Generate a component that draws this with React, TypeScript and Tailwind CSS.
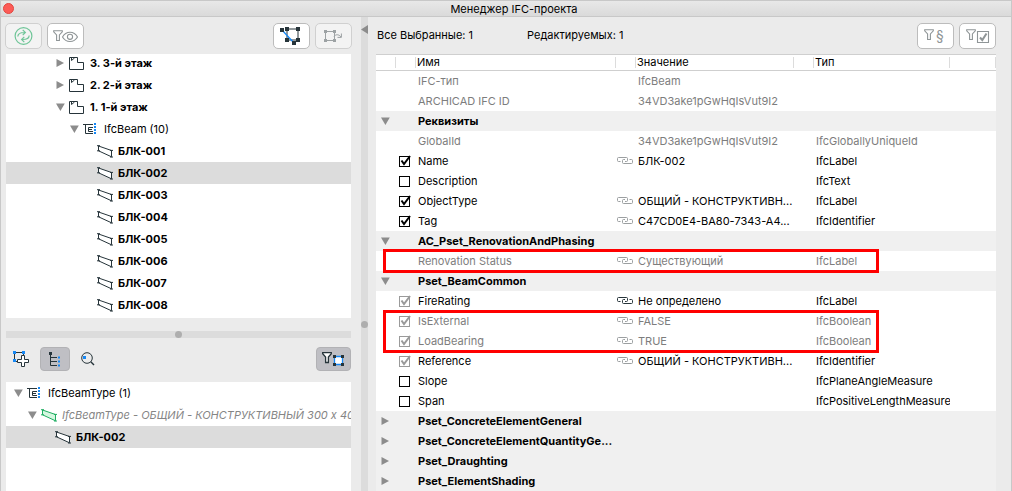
import React from 'react';
import clsx from 'clsx';

type IconProps = { className?: string };

const Funnel = ({ x = 0, y = 0 }: { x?: number; y?: number }) => (
    <path transform={`translate(${x} ${y})`} d="M.7 .7 H9.3 V1.8 L6.4 5 V10.5 H3.6 V5 L.7 1.8 Z" />
);

const RefreshIcon = () => (
    <svg width="19" height="18" viewBox="0 0 19 18" fill="none" stroke="#6fc598" strokeWidth="1.2">
        <circle cx="9.5" cy="9" r="8.4" />
        <path d="M3.8 9.5 C4 6.5 6 5.3 11 5.5 M8.7 2.8 L11.4 5.5 L8.7 8.2" />
        <path d="M15.2 8.5 C15 11.5 13 12.7 8 12.5 M10.3 9.8 L7.6 12.5 L10.3 15.2" />
    </svg>
);

const FilterEyeIcon = () => (
    <svg width="25" height="14" viewBox="0 0 25 14" fill="none" stroke="#8f9597" strokeWidth="1.1">
        <Funnel y={1} />
        <path d="M9.5 8 C13 1.6 21 1.6 24.5 8 C21 14 13 14 9.5 8 Z" />
        <circle cx="17" cy="7.8" r="2.6" />
    </svg>
);

const SelectionIcon = () => (
    <svg width="23" height="20" viewBox="0 0 23 20" fill="#26343a">
        <path d="M7 3 H18 V14 H7 Z" fill="none" stroke="#26343a" />
        <path d="M2 4 L14 17" stroke="#1688f5" strokeWidth="1.3" />
        <path d="M0 2h4v4h-4z M5 1h4v4h-4z M16 1h4v4h-4z M5 12h4v4h-4z M16 12h4v4h-4z M12 15h4v4h-4z" />
    </svg>
);

const SelectionNextIcon = () => (
    <svg width="19" height="14" viewBox="0 0 19 14" fill="#9da2a4">
        <path d="M1.5 2.5 H10.5 V11.5 H1.5 Z M10 8 C11 5 15 5 17 8 M17.4 4.5 V8.4 H13.5" fill="none" stroke="#9da2a4" />
        <path d="M0 1h3v3h-3z M9 1h3v3h-3z M0 10h3v3h-3z M9 10h3v3h-3z" />
    </svg>
);

const FilterParagraphIcon = () => (
    <svg width="23" height="18" viewBox="0 0 23 18" fill="none" stroke="#8f9597" strokeWidth="1.1">
        <Funnel y={2} />
        <text x="12" y="14" fontSize="14" fill="#8f9597" stroke="none">§</text>
    </svg>
);

const FilterCheckIcon = () => (
    <svg width="25" height="16" viewBox="0 0 25 16" fill="none" stroke="#8f9597" strokeWidth="1.1">
        <Funnel x={1} y={1} />
        <path d="M12.5 3.5 H23.5 V14.5 H12.5 Z" />
        <path d="M15 9.5 L17.3 12 L21.5 5.5" strokeWidth="2" />
    </svg>
);

const FilterSelectionIcon = () => (
    <svg width="23" height="16" viewBox="0 0 23 16" fill="white" stroke="#26343a" strokeWidth="1.3">
        <Funnel y={1} />
        <path d="M12.5 5.5 H20.5 V13.5 H12.5 Z" stroke="#1688f5" />
        <path d="M11 4h3v3h-3z M19 4h3v3h-3z M11 12h3v3h-3z M19 12h3v3h-3z" fill="#26343a" stroke="none" />
    </svg>
);

const AddSelectionIcon = () => (
    <svg width="18" height="16" viewBox="0 0 18 16" fill="none" stroke="#26343a">
        <path d="M2 1.5 H10.5 V5 M1.5 2 V10.5 H5" />
        <path d="M8.5 4.5 h3 v4 h4 v3 h-4 v4 h-3 v-4 h-4 v-3 h4 z" fill="white" />
        <path d="M0 0h3v3h-3z M9 0h3v3h-3z M0 8h3v3h-3z" fill="#1688f5" stroke="none" />
    </svg>
);

const TreeIcon = () => (
    <svg width="12" height="15" viewBox="0 0 12 15" fill="none" stroke="#26343a">
        <path d="M1.5 1 V13.5 H8 M1.5 5.5 H8 M1.5 9.5 H8" />
        <path d="M0 0h3v3h-3z" fill="#26343a" stroke="none" />
        <path d="M9 4.5h2v2h-2z M9 8.5h2v2h-2z M9 12.5h2v2h-2z" fill="#1688f5" stroke="none" />
    </svg>
);

const SearchIcon = () => (
    <svg width="14" height="14" viewBox="0 0 14 14" fill="none" stroke="#26343a">
        <circle cx="6" cy="6" r="5.3" />
        <path d="M9.8 9.8 L13 13" strokeWidth="1.4" />
        <path d="M2 4h3v3h-3z" fill="#1688f5" stroke="none" />
    </svg>
);

const StoreyIcon = () => (
    <svg width="16" height="13" viewBox="0 0 16 13" fill="none" stroke="#26343a">
        <path d="M.5 .5 H8.5 V5.5 H14.5 V12.5 H.5 Z" />
        <path d="M2.5 1 V3.5 L5.5 1" />
    </svg>
);

const GroupIcon = () => (
    <svg width="16" height="12" viewBox="0 0 16 12" fill="none" stroke="#26343a">
        <path d="M0 1.5 H10 M2.5 1.5 V10.5 H10 M10 4.5 H5.5 V8.5 H10 M6 6.5 H9" />
        <path d="M11 0h2v2h-2z M11 3h2v2h-2z M11 6h2v2h-2z M11 9h2v2h-2z" fill="#1688f5" stroke="none" />
    </svg>
);

const BeamIcon = ({ className }: IconProps) => (
    <svg width="16" height="13" viewBox="0 0 16 13" className={className || 'fill-white stroke-[#26343a]'}>
        <path d="M1.5 1 L14.5 5.5 V11.8 L1.5 5.8 Z" />
        <path d="M0 .7 H3 M0 5.8 H3 M13 5.4 H16 M13 12 H16" fill="none" />
    </svg>
);

const LinkIcon = ({ className }: IconProps) => (
    <svg width="17" height="8" viewBox="0 0 17 8" fill="none" className={className}>
        <path d="M3.5 4.5 H1.5 Q.5 4.5 .5 3.5 V1.5 Q.5 .5 1.5 .5 H9.5 Q10.5 .5 10.5 1.5 V3.5 Q10.5 4.5 9.5 4.5 H8" />
        <path d="M12.5 2.5 H14.5 Q15.5 2.5 15.5 3.5 V5.5 Q15.5 6.5 14.5 6.5 H6.5 Q5.5 6.5 5.5 5.5 V3.5 Q5.5 2.5 6.5 2.5 H8" />
    </svg>
);

const Disclosure = ({ open, label }: { open: boolean; label: string }) => (
    <button type="button" aria-expanded={open} aria-label={label} className="block size-2 shrink-0">
        <svg width="9" height="8" viewBox="0 0 9 8" fill="#8c8c8c">
            <path d={open ? 'M0 .5 H8.8 L4.4 8 Z' : 'M.5 0 L8 4 L.5 8 Z'} />
        </svg>
    </button>
);

const ToolButton = ({ label, disabled, children }: { label: string; disabled?: boolean; children: React.ReactNode }) => (
    <button
        type="button"
        aria-label={label}
        disabled={disabled}
        className={clsx(
            'flex h-[26px] w-[37px] items-center justify-center rounded-[5px] border',
            disabled ? 'border-[#d0d0d0] bg-[#f3f3f3]' : 'border-[#bcbcbc] bg-white'
        )}
    >
        {children}
    </button>
);

type Node = {
    name: string;
    level: number;
    icon: React.ReactNode;
    open?: boolean;
    bold?: boolean;
    muted?: boolean;
    selected?: boolean;
};

const indents = ['pl-2', 'pl-[22px]', 'pl-9', 'pl-[50px]', 'pl-16', 'pl-[78px]'];

const projectNodes: Node[] = [
    { name: '3. 3-й этаж', level: 3, icon: <StoreyIcon />, open: false, bold: true },
    { name: '2. 2-й этаж', level: 3, icon: <StoreyIcon />, open: false, bold: true },
    { name: '1. 1-й этаж', level: 3, icon: <StoreyIcon />, open: true, bold: true },
    { name: 'IfcBeam (10)', level: 4, icon: <GroupIcon />, open: true },
    ...[1, 2, 3, 4, 5, 6, 7, 8].map((n) => ({
        name: `БЛК-00${n}`,
        level: 5,
        icon: <BeamIcon />,
        bold: true,
        selected: n === 2,
    })),
];

const typeNodes: Node[] = [
    { name: 'IfcBeamType (1)', level: 0, icon: <GroupIcon />, open: true },
    {
        name: 'IfcBeamType - ОБЩИЙ - КОНСТРУКТИВНЫЙ 300 x 40',
        level: 1,
        icon: <BeamIcon className="fill-[#d5f7e0] stroke-[#1fae62]" />,
        open: true,
        muted: true,
    },
    { name: 'БЛК-002', level: 2, icon: <BeamIcon />, bold: true, selected: true },
];

const Tree = ({ nodes, label }: { nodes: Node[]; label: string }) => (
    <ul role="tree" aria-label={label}>
        {nodes.map((node) => (
            <li
                key={node.name}
                role="treeitem"
                aria-level={node.level + 1}
                aria-selected={!!node.selected}
                className={clsx('flex h-[22px] items-center', indents[node.level], node.selected && 'bg-[#dcdcdc]')}
            >
                {node.open === undefined ? <span className="w-2 shrink-0" /> : <Disclosure open={node.open} label={node.name} />}
                <span className="ml-[5px] w-4 shrink-0">{node.icon}</span>
                <span className={clsx('ml-[5px] whitespace-nowrap', node.bold && 'font-bold', node.muted && 'text-[#858585] italic')}>
                    {node.name}
                </span>
            </li>
        ))}
    </ul>
);

type Row = {
    name: string;
    group?: 'open' | 'closed';
    check?: 'on' | 'off' | 'locked';
    link?: 'gray' | 'dark';
    value?: string;
    type?: string;
    muted?: boolean;
};

const rows: Row[] = [
    { name: 'IFC-тип', value: 'IfcBeam', muted: true },
    { name: 'ARCHICAD IFC ID', value: '34VD3ake1pGwHqIsVut9I2', muted: true },
    { name: 'Реквизиты', group: 'open' },
    { name: 'GlobalId', value: '34VD3ake1pGwHqIsVut9I2', type: 'IfcGloballyUniqueId', muted: true },
    { name: 'Name', check: 'on', link: 'gray', value: 'БЛК-002', type: 'IfcLabel' },
    { name: 'Description', check: 'off', type: 'IfcText' },
    { name: 'ObjectType', check: 'on', link: 'gray', value: 'ОБЩИЙ - КОНСТРУКТИВН...', type: 'IfcLabel' },
    { name: 'Tag', check: 'on', link: 'gray', value: 'C47CD0E4-BA80-7343-A4...', type: 'IfcIdentifier' },
    { name: 'AC_Pset_RenovationAndPhasing', group: 'open' },
    { name: 'Renovation Status', link: 'gray', value: 'Существующий', type: 'IfcLabel', muted: true },
    { name: 'Pset_BeamCommon', group: 'open' },
    { name: 'FireRating', check: 'locked', link: 'dark', value: 'Не определено', type: 'IfcLabel' },
    { name: 'IsExternal', check: 'locked', link: 'gray', value: 'FALSE', type: 'IfcBoolean', muted: true },
    { name: 'LoadBearing', check: 'locked', link: 'gray', value: 'TRUE', type: 'IfcBoolean', muted: true },
    { name: 'Reference', check: 'locked', link: 'gray', value: 'ОБЩИЙ - КОНСТРУКТИВН...', type: 'IfcIdentifier' },
    { name: 'Slope', check: 'off', type: 'IfcPlaneAngleMeasure' },
    { name: 'Span', check: 'off', type: 'IfcPositiveLengthMeasure' },
    { name: 'Pset_ConcreteElementGeneral', group: 'closed' },
    { name: 'Pset_ConcreteElementQuantityGe...', group: 'closed' },
    { name: 'Pset_Draughting', group: 'closed' },
    { name: 'Pset_ElementShading', group: 'closed' },
];

const CheckBox = ({ state, label }: { state: 'on' | 'off' | 'locked'; label: string }) => (
    <label className="ml-[3px] grid size-3">
        <input
            type="checkbox"
            aria-label={label}
            defaultChecked={state !== 'off'}
            disabled={state === 'locked'}
            className={clsx(
                'col-start-1 row-start-1 size-[11px] appearance-none self-end border bg-white',
                state === 'locked' ? 'border-[#9a9a9a]' : 'border-black'
            )}
        />
        {state !== 'off' && (
            <svg
                width="12"
                height="12"
                viewBox="0 0 12 12"
                fill="none"
                strokeWidth="2"
                className={clsx('pointer-events-none col-start-1 row-start-1', state === 'locked' ? 'stroke-[#9a9a9a]' : 'stroke-black')}
            >
                <path d="M2.5 5.5 L5 9 L11 1" />
            </svg>
        )}
    </label>
);

const headers = ['', '', 'Имя', '', 'Значение', '', 'Тип', ''];

const PropertyTable = () => (
    <table className="w-full table-fixed border-collapse bg-white text-left">
        <colgroup>
            <col className="w-5" />
            <col className="w-5" />
            <col className="w-[200px]" />
            <col className="w-5" />
            <col className="w-[158px]" />
            <col className="w-5" />
            <col className="w-[136px]" />
            <col />
        </colgroup>
        <thead>
            <tr>
                {headers.map((header, idx) => (
                    <th key={idx} className="h-[17px] p-0 font-normal shadow-[inset_0_1px_#cfcfcf,inset_0_-1px_#cfcfcf]">
                        <div className="h-[11px] border-r border-[#dcdcdc] pl-px leading-[11px]">{header}</div>
                    </th>
                ))}
            </tr>
        </thead>
        <tbody>
            {rows.map((row) => (
                <tr key={row.name} className={clsx(row.group && 'bg-[#f0f0f0]', row.muted && 'text-[#7d7d7d]')}>
                    <td className="h-5 p-0 pl-[5px]">
                        {row.group && <Disclosure open={row.group === 'open'} label={row.name} />}
                    </td>
                    <td className="p-0">{row.check && <CheckBox state={row.check} label={row.name} />}</td>
                    <td className={clsx('p-0 pl-0.5 whitespace-nowrap', row.group && 'font-bold')}>{row.name}</td>
                    <td className="p-0 pl-px">
                        {row.link && <LinkIcon className={row.link === 'dark' ? 'stroke-[#26343a]' : 'stroke-[#9b9fa1]'} />}
                    </td>
                    <td className="p-0 pl-0.5 whitespace-nowrap">{row.value}</td>
                    <td className="p-0" />
                    <td className="overflow-hidden p-0 pl-0.5 whitespace-nowrap">{row.type}</td>
                    <td className="p-0" />
                </tr>
            ))}
        </tbody>
    </table>
);

export default function App() {
    return (
        <div className="flex h-screen flex-col overflow-hidden border border-b-0 border-[#c8c8c8] bg-[#ebebeb] font-[Inter,'Liberation_Sans',sans-serif] text-[11px] leading-4 text-black">
            <header className="relative flex h-4 shrink-0 items-center justify-center border-b border-[#c8c8c8] bg-linear-to-b from-[#e8e8e8] to-[#dadada]">
                <button type="button" aria-label="Закрыть" className="absolute left-0.5 size-[11px] rounded-full border border-[#e2463f] bg-[#fc5b57]" />
                <h1 className="pl-4">Менеджер IFC-проекта</h1>
            </header>

            <main className="flex min-h-0 flex-1">
                <section className="flex w-[360px] shrink-0 flex-col pr-[10px] pl-[5px]">
                    {/* Main tools */}
                    <div className="-mx-px flex h-[37px] shrink-0 items-center gap-[5px]">
                        <ToolButton label="Обновить" disabled><RefreshIcon /></ToolButton>
                        <ToolButton label="Фильтр видимости"><FilterEyeIcon /></ToolButton>
                        <div className="ml-auto flex gap-[5px]">
                            <ToolButton label="Выбрать элементы"><SelectionIcon /></ToolButton>
                            <ToolButton label="Перейти к элементам" disabled><SelectionNextIcon /></ToolButton>
                        </div>
                    </div>

                    {/* Project tree */}
                    <div className="flex h-[264px] shrink-0 flex-col justify-center overflow-hidden bg-white pb-1">
                        <Tree nodes={projectNodes} label="Структура проекта" />
                    </div>

                    <div role="separator" className="mt-[13px] flex h-[7px] shrink-0 items-center justify-center bg-[#dcdcdc]">
                        <span className="size-[7px] rounded-full bg-[#aeaeae]" />
                    </div>

                    {/* Type tools */}
                    <div className="flex h-11 shrink-0 items-center gap-[3px] pb-0.5 pl-px">
                        <button type="button" aria-label="Добавить" className="flex h-6 w-[30px] items-center justify-center"><AddSelectionIcon /></button>
                        <button type="button" aria-label="Дерево" aria-pressed="true" className="flex h-6 w-[30px] items-center justify-center rounded border border-[#b2b2b5] bg-[#bfbfc4]"><TreeIcon /></button>
                        <button type="button" aria-label="Найти" className="flex h-6 w-[30px] items-center justify-center"><SearchIcon /></button>
                        <button type="button" aria-label="Фильтр выбора" aria-pressed="true" className="ml-auto flex h-6 w-[35px] items-center justify-center rounded border border-[#b2b2b5] bg-[#bfbfc4]"><FilterSelectionIcon /></button>
                    </div>

                    <div className="min-h-0 flex-1 overflow-hidden bg-white">
                        <Tree nodes={typeNodes} label="Типы" />
                    </div>
                </section>

                {/* Panel divider */}
                <div role="separator" className="flex w-[7px] shrink-0 flex-col items-center bg-[#dcdcdc]">
                    <button type="button" aria-label="Свернуть панель" className="mt-2 block">
                        <svg width="7" height="9" viewBox="0 0 7 9" fill="#8c8c8c"><path d="M7 0 V9 L0 4.5 Z" /></svg>
                    </button>
                    <span className="mt-[287px] size-[7px] shrink-0 rounded-full bg-[#aeaeae]" />
                </div>

                <section className="min-w-0 flex-1 pr-[15px] pl-2">
                    <div className="flex h-[37px] items-center gap-[5px]">
                        <p className="w-[146px] pb-0.5 pl-px">Все Выбранные: 1</p>
                        <p className="pb-0.5">Редактируемых: 1</p>
                        <div className="ml-auto flex gap-[5px]">
                            <ToolButton label="Фильтр правил"><FilterParagraphIcon /></ToolButton>
                            <ToolButton label="Фильтр отмеченных"><FilterCheckIcon /></ToolButton>
                        </div>
                    </div>
                    <div className="relative">
                        <PropertyTable />
                        {/* Highlight frames over the locked properties */}
                        <div className="pointer-events-none absolute top-[195px] left-[7px] h-6 w-[496px] border-3 border-[#ff0000]" />
                        <div className="pointer-events-none absolute top-64 left-[7px] h-[43px] w-[496px] border-3 border-[#ff0000]" />
                    </div>
                </section>
            </main>
        </div>
    );
}
